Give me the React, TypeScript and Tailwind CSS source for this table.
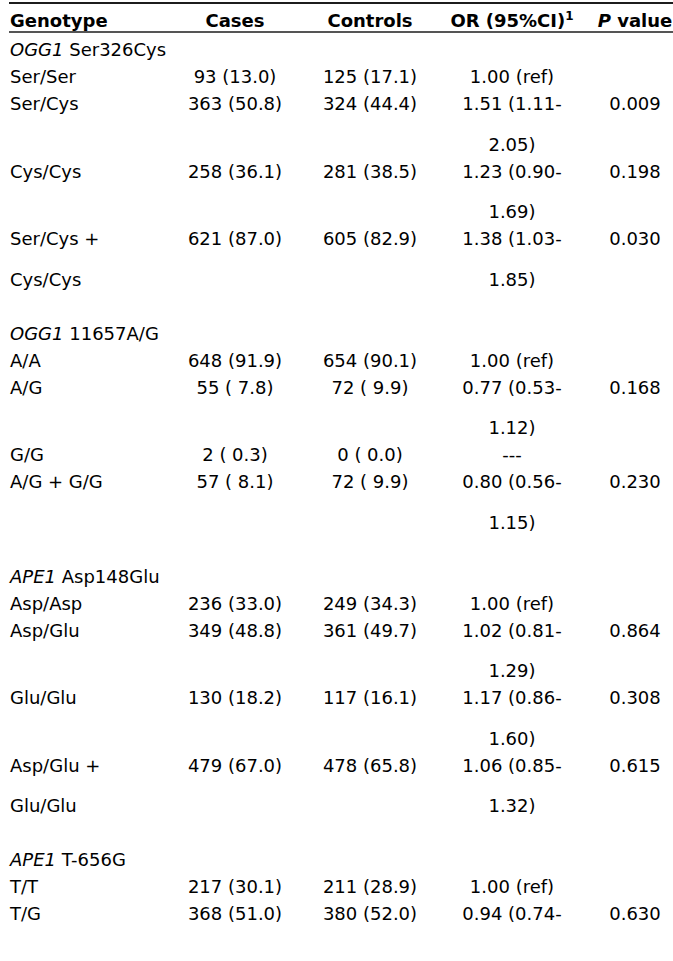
import React from 'react';

type Row = {
  label?: React.ReactNode;
  label2?: string;
  cases?: string;
  controls?: string;
  or?: string;
  or2?: string;
  p?: string;
};

const rows: Row[] = [
  { label: <><i>OGG1</i> Ser326Cys</> },
  { label: 'Ser/Ser', cases: '93 (13.0)', controls: '125 (17.1)', or: '1.00 (ref)' },
  { label: 'Ser/Cys', cases: '363 (50.8)', controls: '324 (44.4)', or: '1.51 (1.11-', or2: '2.05)', p: '0.009' },
  { label: 'Cys/Cys', cases: '258 (36.1)', controls: '281 (38.5)', or: '1.23 (0.90-', or2: '1.69)', p: '0.198' },
  { label: 'Ser/Cys +', label2: 'Cys/Cys', cases: '621 (87.0)', controls: '605 (82.9)', or: '1.38 (1.03-', or2: '1.85)', p: '0.030' },
  {},
  { label: <><i>OGG1</i> 11657A/G</> },
  { label: 'A/A', cases: '648 (91.9)', controls: '654 (90.1)', or: '1.00 (ref)' },
  { label: 'A/G', cases: '55 ( 7.8)', controls: '72 ( 9.9)', or: '0.77 (0.53-', or2: '1.12)', p: '0.168' },
  { label: 'G/G', cases: '2 ( 0.3)', controls: '0 ( 0.0)', or: '---' },
  { label: 'A/G + G/G', cases: '57 ( 8.1)', controls: '72 ( 9.9)', or: '0.80 (0.56-', or2: '1.15)', p: '0.230' },
  {},
  { label: <><i>APE1</i> Asp148Glu</> },
  { label: 'Asp/Asp', cases: '236 (33.0)', controls: '249 (34.3)', or: '1.00 (ref)' },
  { label: 'Asp/Glu', cases: '349 (48.8)', controls: '361 (49.7)', or: '1.02 (0.81-', or2: '1.29)', p: '0.864' },
  { label: 'Glu/Glu', cases: '130 (18.2)', controls: '117 (16.1)', or: '1.17 (0.86-', or2: '1.60)', p: '0.308' },
  { label: 'Asp/Glu +', label2: 'Glu/Glu', cases: '479 (67.0)', controls: '478 (65.8)', or: '1.06 (0.85-', or2: '1.32)', p: '0.615' },
  {},
  { label: <><i>APE1</i> T-656G</> },
  { label: 'T/T', cases: '217 (30.1)', controls: '211 (28.9)', or: '1.00 (ref)' },
  { label: 'T/G', cases: '368 (51.0)', controls: '380 (52.0)', or: '0.94 (0.74-', p: '0.630' },
];

const cols = 'grid grid-cols-[159px_134px_136px_148px_98px]';

function Cell({ first, second, left }: { first?: React.ReactNode; second?: string; left?: boolean }) {
  return (
    <div className={left ? 'pl-[1px] text-left' : 'text-center'}>
      <div className="h-[27px] whitespace-pre">{first}</div>
      {second && <div className="mt-[13.5px] h-[27px] whitespace-pre">{second}</div>}
    </div>
  );
}

export default function App() {
  return (
    <div
      className="w-[673px] h-[961px] overflow-hidden bg-white text-[18px] leading-[27px] text-black"
      style={{ fontFamily: '"DejaVu Sans", Verdana, sans-serif' }}
    >
      <div className="ml-[9px] mt-[2px] w-[675px] border-t-2 border-[#1c1c1c]">
        {/* Header */}
        <div className={`${cols} h-[29px] pt-[6px] leading-[21px] font-bold border-b-2 border-[#555]`}>
          <div className="pl-[1px]">Genotype</div>
          <div className="text-center">Cases</div>
          <div className="text-center">Controls</div>
          <div className="text-center">
            OR (95%CI)<sup className="text-[12px] -top-[7px]">1</sup>
          </div>
          <div className="text-center">
            <i>P</i> value
          </div>
        </div>

        {/* Body */}
        <div className="pt-[3px]">
          {rows.map((r, i) => (
            <div key={i} className={`${cols} min-h-[27px]`}>
              <Cell left first={r.label} second={r.label2} />
              <Cell first={r.cases} />
              <Cell first={r.controls} />
              <Cell first={r.or} second={r.or2} />
              <Cell first={r.p} />
            </div>
          ))}
        </div>
      </div>
    </div>
  );
}
